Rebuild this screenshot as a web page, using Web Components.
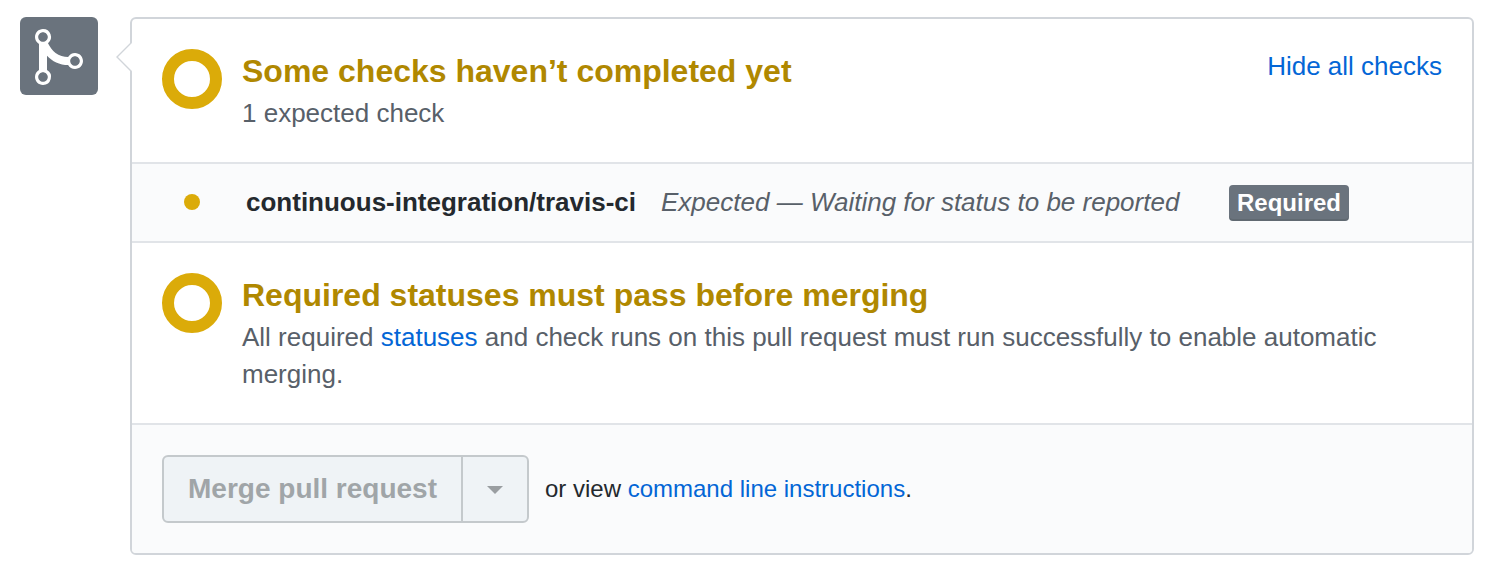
<!DOCTYPE html>
<html lang="en"><head><meta charset="utf-8"><title>Merge status</title>
<style>
body{margin:0;background:#fff;font-family:"Liberation Sans",Arial,sans-serif;color:#24292e}
</style></head><body>
<merge-panel></merge-panel>
<script>
const define=(name,html)=>customElements.define(name,class extends HTMLElement{
  constructor(){super();this.attachShadow({mode:"open"}).innerHTML=html;}
});
define("merge-avatar",`<style>:host{display:block;box-sizing:border-box;width:78px;height:78px;padding:8px 15px;border-radius:6px;background:#6a737d;color:#fff}svg{display:block}</style>
<svg width="48" height="64" viewBox="0 0 12 16" fill="currentColor"><path fill-rule="evenodd" d="M10 7c-.73 0-1.38.41-1.73 1.02V8C7.22 7.98 6 7.64 5.14 6.98c-.75-.58-1.5-1.61-1.89-2.44A1.993 1.993 0 0 0 2 .99C.89.99 0 1.89 0 3a2 2 0 0 0 1 1.72v6.56c-.59.35-1 .99-1 1.72 0 1.11.89 2 2 2a1.993 1.993 0 0 0 1-3.72V7.67c.67.7 1.44 1.27 2.3 1.69.86.42 2.03.63 2.97.64v-.02c.36.61 1 1.02 1.73 1.02 1.11 0 2-.89 2-2 0-1.11-.89-2-2-2zm-6.8 6c0 .66-.55 1.2-1.2 1.2-.65 0-1.2-.55-1.2-1.2 0-.65.55-1.2 1.2-1.2.65 0 1.2.55 1.2 1.2zM2 4.2C1.34 4.2.8 3.65.8 3c0-.65.55-1.2 1.2-1.2.65 0 1.2.55 1.2 1.2 0 .65-.55 1.2-1.2 1.2zm8 6c-.66 0-1.2-.55-1.2-1.2 0-.65.55-1.2 1.2-1.2.65 0 1.2.55 1.2 1.2 0 .65-.55 1.2-1.2 1.2z"/></svg>`);
define("text-link",`<style>:host{display:inline;color:#0366d6}a{color:inherit;text-decoration:none;cursor:pointer}</style><a><slot></slot></a>`);
define("status-section",`<style>:host{display:flex;align-items:flex-start;box-sizing:border-box;padding:30px;border-bottom:2px solid #e1e4e8}
.ring{box-sizing:border-box;width:60px;height:60px;border:12px solid #dbab09;border-radius:50%;flex:none;margin-right:20px}
.body{flex:1;min-width:0}
h3{margin:0;font-size:32px;line-height:45px;font-weight:700;color:#b08800}
p{margin:0;font-size:26px;line-height:37px;padding-top:1px;color:#586069;white-space:nowrap}
.action{font-size:26px;line-height:35px;white-space:nowrap}</style>
<div class="ring"></div><div class="body"><h3><slot name="title"></slot></h3><p><slot></slot></p></div><div class="action"><slot name="action"></slot></div>`);
define("status-badge",`<style>:host{display:block;box-sizing:border-box;width:120px;height:36px;border-radius:4px;background:#6a737d;color:#fff;font-size:24px;line-height:36px;font-weight:700;text-align:center;box-shadow:inset 0 -2px rgba(27,31,35,.12)}</style><slot></slot>`);
define("check-row",`<style>:host{display:flex;align-items:flex-start;box-sizing:border-box;height:79px;padding:21px 123px 0 52px;background:#fafbfc;border-bottom:2px solid #e1e4e8;font-size:26px;line-height:34px;white-space:nowrap}
.dot{width:16px;height:16px;border-radius:50%;background:#dbab09;margin:9px 46px 0 0}
b{margin-right:25px}em{color:#586069;flex:1}</style>
<span class="dot"></span><b><slot name="name"></slot></b><em><slot></slot></em><slot name="badge"></slot>`);
define("merge-button",`<style>:host{display:flex;box-sizing:border-box;width:367px;height:68px;border:2px solid #c4c9cc;border-radius:6px;background:#eff3f6;color:#a0a5a8;font-size:28px;line-height:64px;font-weight:700;white-space:nowrap}
.label{width:297px;text-align:center}.caret{flex:1;border-left:2px solid #c4c9cc;display:flex;align-items:center;justify-content:center}svg{display:block;margin-top:2px}</style>
<div class="label"><slot></slot></div><div class="caret"><svg width="16" height="8"><path d="M0 0H16L8 8Z" fill="#9a9ea1"/></svg></div>`);
define("merge-footer",`<style>:host{display:flex;align-items:center;box-sizing:border-box;height:128px;padding:0 30px;gap:16px;background:#fafbfc;font-size:24px}</style><slot></slot>`);
define("merge-panel",`<style>:host{display:flex;box-sizing:border-box;height:576px;padding:17px 16px 21px 20px}
.box{position:relative;box-sizing:border-box;width:1344px;height:538px;margin-left:32px;border:2px solid #d1d5da;border-radius:6px;background:#fff}
.clip{border-radius:4px;overflow:hidden}
.tip{position:absolute;left:-16px;top:23px}
.first{height:145px}.second{height:182px}</style>
<merge-avatar></merge-avatar>
<div class="box"><svg class="tip" width="16" height="30" viewBox="0 0 16 30"><path d="M14 1H16V29H14Z" fill="#fff"/><path d="M15.5 0.5L1 15L15.5 29.5Z" fill="#fff"/><path d="M15.5 .5L1 15L15.5 29.5" fill="none" stroke="#d1d5da" stroke-width="1.4"/></svg>
<div class="clip">
<status-section class="first"><span slot="title">Some checks haven’t completed yet</span>1 expected check<text-link slot="action">Hide all checks</text-link></status-section>
<check-row><span slot="name">continuous-integration/travis-ci</span>Expected — Waiting for status to be reported<status-badge slot="badge">Required</status-badge></check-row>
<status-section class="second"><span slot="title">Required statuses must pass before merging</span>All required <text-link>statuses</text-link> and check runs on this pull request must run successfully to enable automatic<br>merging.</status-section>
<merge-footer><merge-button>Merge pull request</merge-button><span>or view <text-link>command line instructions</text-link>.</span></merge-footer>
</div></div>`);
</script></body></html>
